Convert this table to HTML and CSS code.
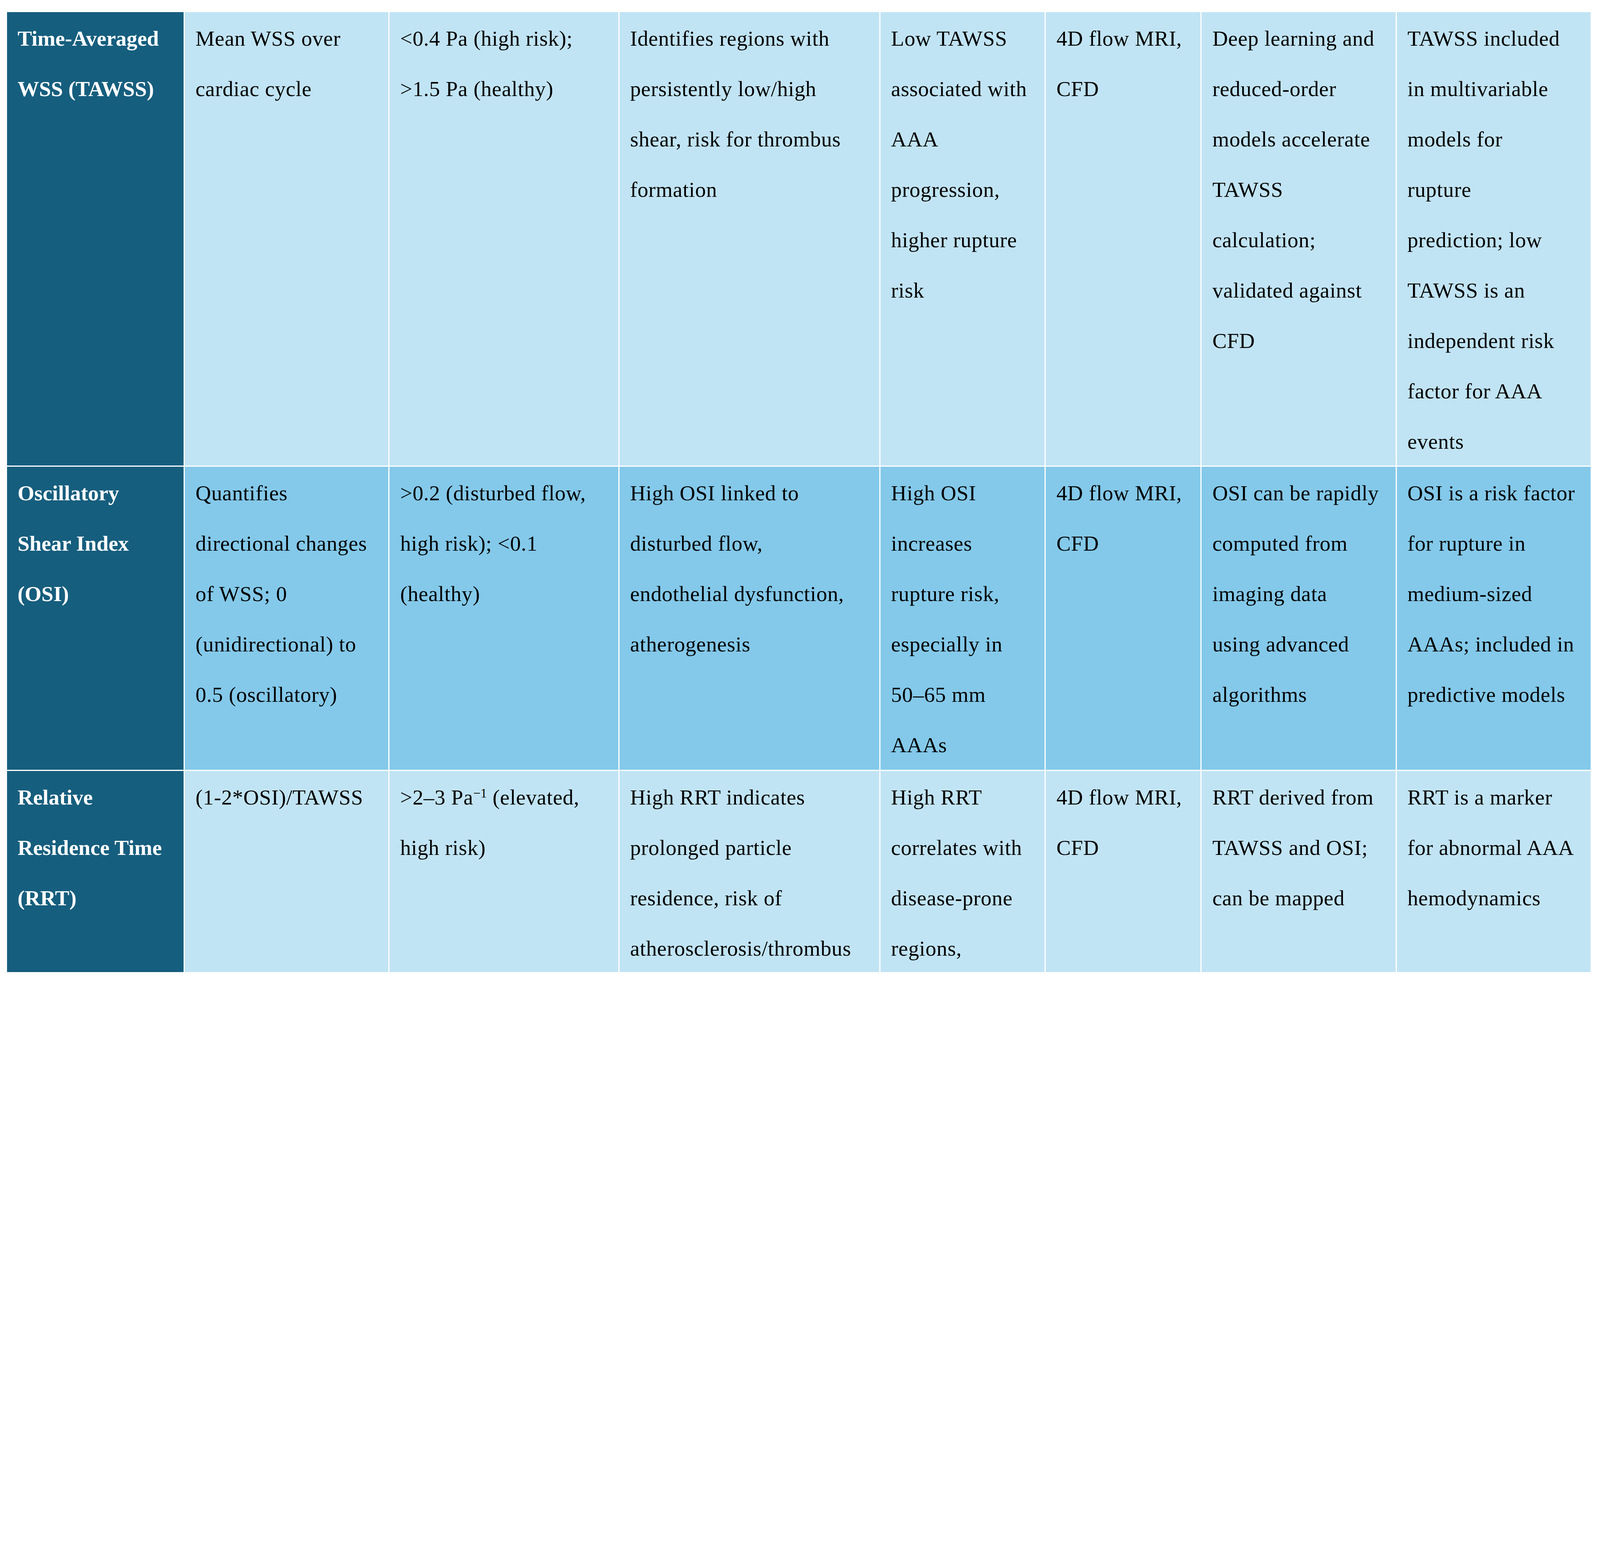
FILE: index.html
```html
<!DOCTYPE html>
<html lang="en">
<head>
<meta charset="utf-8">
<title>Hemodynamic indices</title>
<link rel="stylesheet" href="styles.css">
</head>
<body>
<div class="table">
  <div class="cell head">Time-Averaged<br>WSS (TAWSS)</div>
  <div class="cell light">Mean WSS over<br>cardiac cycle</div>
  <div class="cell light">&lt;0.4 Pa (high risk);<br>&gt;1.5 Pa (healthy)</div>
  <div class="cell light">Identifies regions with<br>persistently low/high<br>shear, risk for thrombus<br>formation</div>
  <div class="cell light">Low TAWSS<br>associated with<br>AAA<br>progression,<br>higher rupture<br>risk</div>
  <div class="cell light">4D flow MRI,<br>CFD</div>
  <div class="cell light">Deep learning and<br>reduced-order<br>models accelerate<br>TAWSS<br>calculation;<br>validated against<br>CFD</div>
  <div class="cell light">TAWSS included<br>in multivariable<br>models for<br>rupture<br>prediction; low<br>TAWSS is an<br>independent risk<br>factor for AAA<br>events</div>

  <div class="cell head">Oscillatory<br>Shear Index<br>(OSI)</div>
  <div class="cell mid">Quantifies<br>directional changes<br>of WSS; 0<br>(unidirectional) to<br>0.5 (oscillatory)</div>
  <div class="cell mid">&gt;0.2 (disturbed flow,<br>high risk); &lt;0.1<br>(healthy)</div>
  <div class="cell mid">High OSI linked to<br>disturbed flow,<br>endothelial dysfunction,<br>atherogenesis</div>
  <div class="cell mid">High OSI<br>increases<br>rupture risk,<br>especially in<br>50–65 mm<br>AAAs</div>
  <div class="cell mid">4D flow MRI,<br>CFD</div>
  <div class="cell mid">OSI can be rapidly<br>computed from<br>imaging data<br>using advanced<br>algorithms</div>
  <div class="cell mid">OSI is a risk factor<br>for rupture in<br>medium-sized<br>AAAs; included in<br>predictive models</div>

  <div class="cell head">Relative<br>Residence Time<br>(RRT)</div>
  <div class="cell light">(1-2*OSI)/TAWSS</div>
  <div class="cell light">&gt;2–3 Pa<sup class="sup">−1</sup> (elevated,<br>high risk)</div>
  <div class="cell light">High RRT indicates<br>prolonged particle<br>residence, risk of<br>atherosclerosis/thrombus</div>
  <div class="cell light">High RRT<br>correlates with<br>disease-prone<br>regions,</div>
  <div class="cell light">4D flow MRI,<br>CFD</div>
  <div class="cell light">RRT derived from<br>TAWSS and OSI;<br>can be mapped</div>
  <div class="cell light">RRT is a marker<br>for abnormal AAA<br>hemodynamics</div>
</div>
</body>
</html>
```
FILE: styles.css
```css
:root {
  --u: calc(100vw / 6473);
}

html, body {
  margin: 0;
  padding: 0;
  background: #ffffff;
  overflow: hidden;
}

body {
  font-family: "Liberation Serif", "Times New Roman", serif;
  font-size: calc(87 * var(--u));
  color: #000000;
}

.table {
  display: grid;
  grid-template-columns:
    calc(715 * var(--u)) calc(823 * var(--u)) calc(925 * var(--u)) calc(1051 * var(--u))
    calc(664 * var(--u)) calc(626 * var(--u)) calc(784 * var(--u)) calc(785 * var(--u));
  grid-template-rows: calc(1835 * var(--u)) calc(1226 * var(--u)) calc(814 * var(--u));
  gap: calc(5 * var(--u));
  margin-top: calc(49 * var(--u));
  margin-left: calc(28 * var(--u));
  width: calc(6408 * var(--u));
}

.cell {
  padding: calc(4 * var(--u)) calc(20 * var(--u)) 0 calc(43 * var(--u));
  line-height: calc(204 * var(--u));
  white-space: nowrap;
  overflow: hidden;
}

.head {
  background: #165e7e;
  color: #ffffff;
  font-weight: bold;
}

.light,
.mid {
  letter-spacing: 0.012em;
}

.light {
  background: #c1e4f4;
}

.mid {
  background: #84c9ea;
}

.sup {
  font-size: 0.6em;
  line-height: 0;
  vertical-align: 0.55em;
  letter-spacing: 0;
}
```
